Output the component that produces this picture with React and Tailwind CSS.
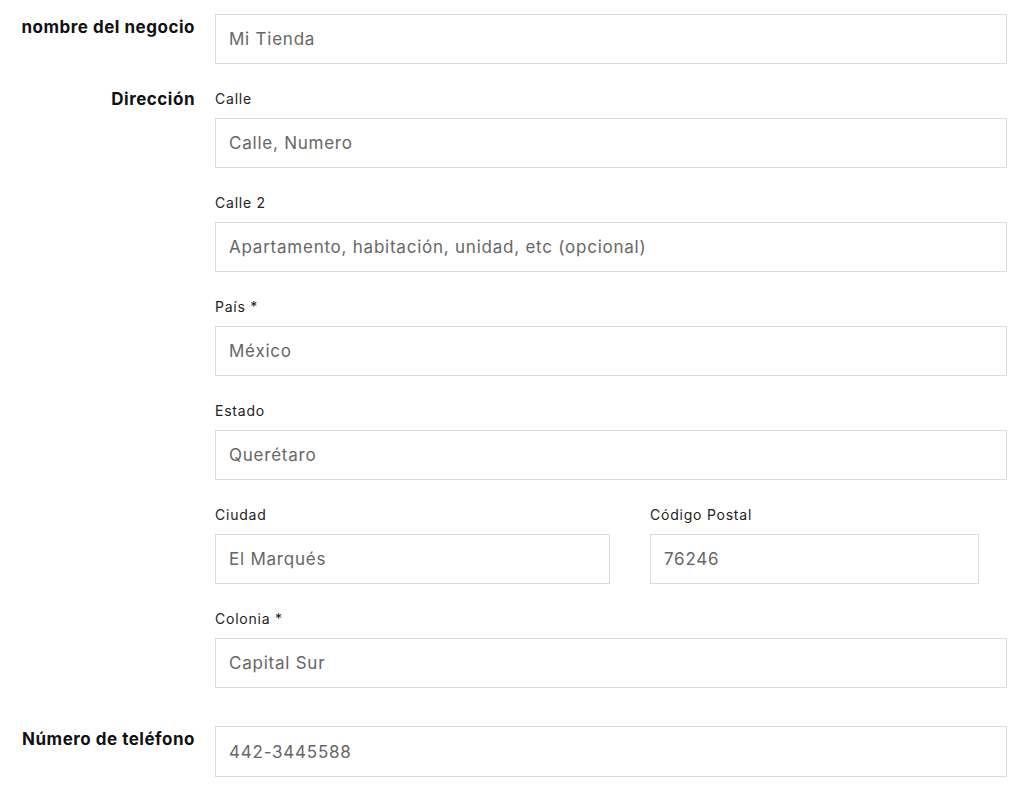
const font = { fontFamily: 'Inter, "Open Sans", sans-serif' }

const inputCls =
  'w-full h-[50px] border border-[#dcdcdc] px-[13px] text-[17px] tracking-[0.045em] text-[#666] bg-white outline-none'

function Field({ label, value, className = 'w-[792px]' }) {
  return (
    <div className={className}>
      <div className="text-[14px] leading-[20px] tracking-[0.055em] text-[#222] mb-[9px]">{label}</div>
      <input readOnly value={value} className={inputCls} />
    </div>
  )
}

function Row({ label, children, className = '' }) {
  return (
    <div className={`flex ${className}`}>
      <div className="w-[195px] shrink-0 text-right font-bold text-[17px] leading-[20px] tracking-[0.03em] text-[#111]">
        {label}
      </div>
      <div className="ml-[20px] flex flex-col">{children}</div>
    </div>
  )
}

export default function App() {
  return (
    <div className="bg-white min-h-screen pt-[14px]" style={font}>
      <Row label={<span className="block pt-[3px]">nombre del negocio</span>}>
        <div className="w-[792px]">
          <input readOnly value="Mi Tienda" className={inputCls} />
        </div>
      </Row>

      <Row label="Dirección" className="mt-[25px]">
        <div className="flex flex-col gap-[25px]">
          <Field label="Calle" value="Calle, Numero" />
          <Field label="Calle 2" value="Apartamento, habitación, unidad, etc (opcional)" />
          <Field label="País *" value="México" />
          <Field label="Estado" value="Querétaro" />
          <div className="flex gap-[40px]">
            <Field label="Ciudad" value="El Marqués" className="w-[395px]" />
            <Field label="Código Postal" value="76246" className="w-[329px]" />
          </div>
          <Field label="Colonia *" value="Capital Sur" />
        </div>
      </Row>

      <Row label={<span className="block pt-[3px]">Número de teléfono</span>} className="mt-[38px]">
        <div className="w-[792px]">
          <input readOnly value="442-3445588" className={`${inputCls} h-[51px]`} />
        </div>
      </Row>
    </div>
  )
}
